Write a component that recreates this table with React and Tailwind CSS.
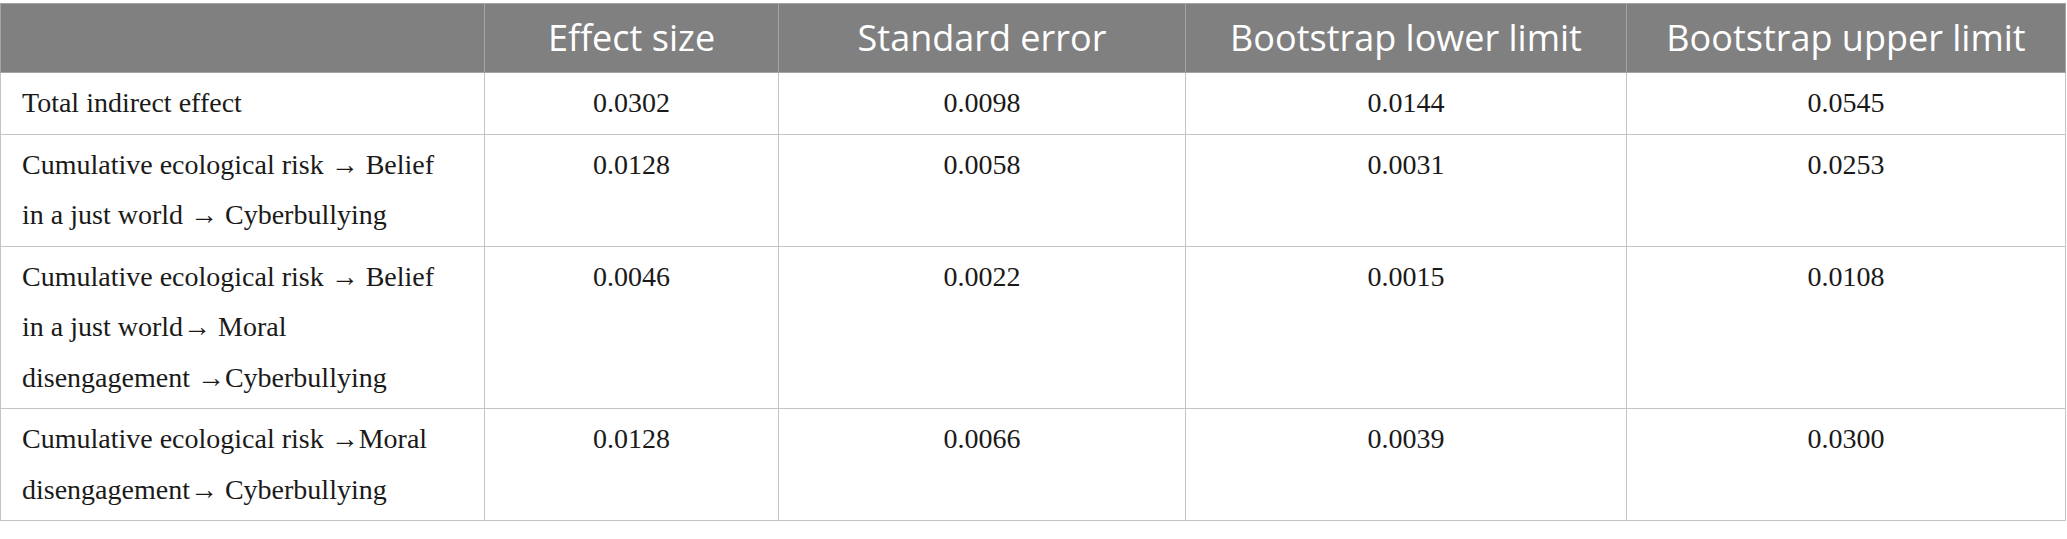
const headers = [
  "Effect size",
  "Standard error",
  "Bootstrap lower limit",
  "Bootstrap upper limit",
];

const rows = [
  {
    label: "Total indirect effect",
    values: ["0.0302", "0.0098", "0.0144", "0.0545"],
  },
  {
    label: "Cumulative ecological risk → Belief in a just world → Cyberbullying",
    values: ["0.0128", "0.0058", "0.0031", "0.0253"],
  },
  {
    label:
      "Cumulative ecological risk → Belief in a just world\u2192 Moral disengagement \u2192Cyberbullying",
    values: ["0.0046", "0.0022", "0.0015", "0.0108"],
  },
  {
    label: "Cumulative ecological risk \u2192Moral disengagement\u2192 Cyberbullying",
    values: ["0.0128", "0.0066", "0.0039", "0.0300"],
  },
];

export default function App() {
  return (
    <div className="min-h-[539px] bg-white pt-[3px]">
      <table className="w-[2065px] table-fixed border-collapse border border-[#c4c4c4]">
        <colgroup>
          <col className="w-[484px]" />
          <col className="w-[294px]" />
          <col className="w-[407px]" />
          <col className="w-[441px]" />
          <col className="w-[439px]" />
        </colgroup>

        {/* Header */}
        <thead>
          <tr className="bg-[#808080] h-[69px]">
            <th className="border border-[#a3a3a3] p-0" />
            {headers.map((h) => (
              <th
                key={h}
                className="border border-[#a3a3a3] p-0 text-center align-middle font-normal text-white text-[36px] leading-[40px] font-['Open_Sans',sans-serif]"
              >
                {h}
              </th>
            ))}
          </tr>
        </thead>

        <tbody>
          {rows.map((row, i) => (
            <tr key={i}>
              <td className="border border-[#c4c4c4] align-top pl-[21px] pr-[32px] pt-[5px] pb-[5px] text-[28px] leading-[50.5px] text-[#1a1a1a] font-['Liberation_Serif',serif]">
                {row.label}
              </td>
              {row.values.map((v, j) => (
                <td
                  key={j}
                  className="border border-[#c4c4c4] align-top text-center pt-[5px] pb-[5px] text-[28px] leading-[50.5px] text-[#1a1a1a] font-['Liberation_Serif',serif]"
                >
                  {v}
                </td>
              ))}
            </tr>
          ))}
        </tbody>
      </table>
    </div>
  );
}
